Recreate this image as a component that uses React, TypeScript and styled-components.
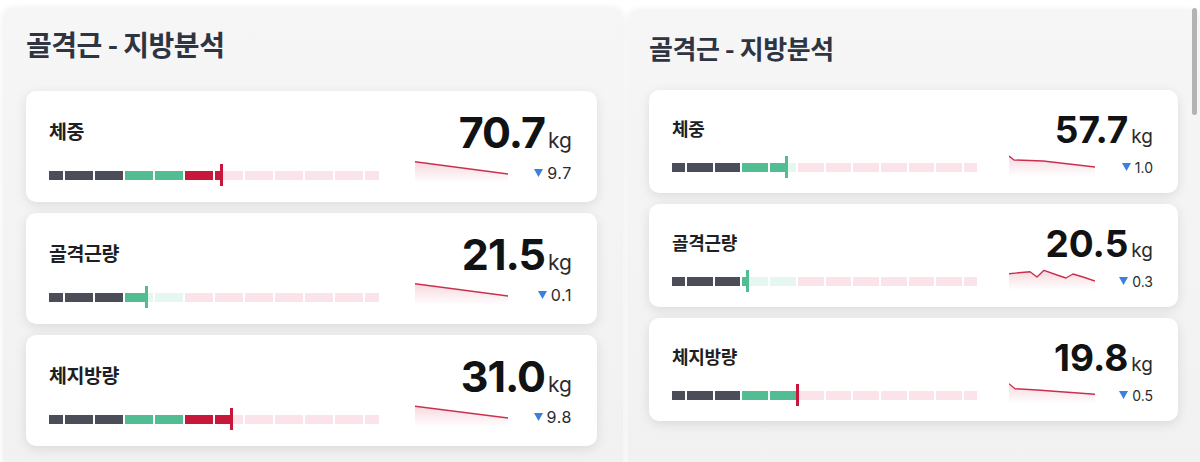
import React, { useId } from "react";
import styled, { createGlobalStyle } from "styled-components";

type Variant = "wide" | "narrow";
type Status = "normal" | "over";

const S = {
  wide: {
    panelTop: "0px", padTop: 20, padL: 23, padR: 26,
    titleSize: 28, titleLH: 33, titleTrack: -0.5, titleGap: 30,
    cardH: 111, cardGap: 11,
    labelSize: 19.5, labelLH: 23, labelTop: 28, labelTrack: -0.4, barGap: 29, barW: 330,
    valueSize: 43, valueTrack: -1, valueTop: 20, kgSize: 21,
    sparkGap: 7, sparkW: 93, sparkH: 22, deltaW: 64, deltaSize: 16, deltaLH: 19, deltaTrack: 0.6,
  },
  narrow: {
    panelTop: "2px", padTop: 22, padL: 21, padR: 22,
    titleSize: 26, titleLH: 31, titleTrack: -0.4, titleGap: 27,
    cardH: 103, cardGap: 11,
    labelSize: 18, labelLH: 21, labelTop: 28, labelTrack: -0.3, barGap: 24, barW: 305,
    valueSize: 37, valueTrack: 0, valueTop: 21, kgSize: 19,
    sparkGap: 6, sparkW: 86, sparkH: 22, deltaW: 58, deltaSize: 14, deltaLH: 17, deltaTrack: 0,
  },
};

const GlobalStyle = createGlobalStyle`
  html, body { margin: 0; padding: 0; background: #ffffff; }
  body { font-family: Inter, "Noto Sans CJK KR", "Noto Sans", sans-serif; }
`;

const Page = styled.div`
  display: flex;
  align-items: flex-start;
  gap: 5px;
  width: 1200px;
  height: 462px;
  padding: 8px 0 0 3px;
  box-sizing: border-box;
  overflow: hidden;
  background: #ffffff;
`;

const PanelBox = styled.section<{ $v: Variant }>`
  position: relative;
  flex: ${(p) => (p.$v === "wide" ? "0 0 620px" : "1 1 auto")};
  margin-top: ${(p) => S[p.$v].panelTop};
  height: 470px;
  box-sizing: border-box;
  padding: ${(p) => `${S[p.$v].padTop}px ${S[p.$v].padR}px 0 ${S[p.$v].padL}px`};
  background: linear-gradient(180deg, #f6f6f7 0%, #f1f1f2 100%);
  border-radius: 10px 10px 0 0;
  box-shadow: 0 0 7px rgba(0, 0, 0, 0.07);
  display: flex;
  flex-direction: column;
`;

const Title = styled.h2<{ $v: Variant }>`
  margin: 0 0 ${(p) => S[p.$v].titleGap}px 0;
  font-family: "Noto Sans CJK KR", "Noto Sans", sans-serif;
  font-weight: 700;
  font-size: ${(p) => S[p.$v].titleSize}px;
  line-height: ${(p) => S[p.$v].titleLH}px;
  letter-spacing: ${(p) => S[p.$v].titleTrack}px;
  color: #2e3441;
`;

const CardList = styled.div<{ $v: Variant }>`
  display: flex;
  flex-direction: column;
  gap: ${(p) => S[p.$v].cardGap}px;
`;

const Card = styled.div<{ $v: Variant }>`
  height: ${(p) => S[p.$v].cardH}px;
  box-sizing: border-box;
  padding: 0 25px 0 23px;
  background: #ffffff;
  border-radius: 10px;
  box-shadow: 0 3px 12px rgba(0, 0, 0, 0.1);
  display: flex;
  justify-content: space-between;
  align-items: flex-start;
`;

const LeftCol = styled.div<{ $v: Variant }>`
  display: flex;
  flex-direction: column;
  padding-top: ${(p) => S[p.$v].labelTop}px;
`;

const Label = styled.div<{ $v: Variant }>`
  font-family: "Noto Sans CJK KR", "Noto Sans", sans-serif;
  font-weight: 700;
  font-size: ${(p) => S[p.$v].labelSize}px;
  line-height: ${(p) => S[p.$v].labelLH}px;
  letter-spacing: ${(p) => S[p.$v].labelTrack}px;
  color: #1d1f24;
`;

const Bar = styled.div<{ $v: Variant }>`
  position: relative;
  width: ${(p) => S[p.$v].barW}px;
  height: 9px;
  margin-top: ${(p) => S[p.$v].barGap}px;
`;

const SegRow = styled.div`
  position: absolute;
  inset: 0;
  display: flex;
  gap: 2px;
`;

const ZONE = {
  dark: { full: "#4b4e58", pale: "#e4e5e8" },
  green: { full: "#52bc92", pale: "#e6f6f0" },
  red: { full: "#c8173a", pale: "#fbe4e9" },
};

const Seg = styled.div<{ $grow: number; $color: string }>`
  flex: ${(p) => p.$grow} 1 0;
  height: 100%;
  background: ${(p) => p.$color};
`;

const Marker = styled.div<{ $status: Status }>`
  position: absolute;
  top: -7px;
  bottom: -6px;
  width: 3px;
  background: ${(p) => (p.$status === "over" ? ZONE.red.full : ZONE.green.full)};
`;

const RightCol = styled.div<{ $v: Variant }>`
  display: flex;
  flex-direction: column;
  align-items: flex-end;
  padding-top: ${(p) => S[p.$v].valueTop}px;
`;

const ValueRow = styled.div`
  display: flex;
  align-items: baseline;
`;

const Value = styled.span<{ $v: Variant }>`
  font-family: Inter, "Noto Sans", sans-serif;
  font-weight: 700;
  font-size: ${(p) => S[p.$v].valueSize}px;
  line-height: ${(p) => S[p.$v].valueSize}px;
  letter-spacing: ${(p) => S[p.$v].valueTrack}px;
  color: #111214;
`;

const Unit = styled.span<{ $v: Variant }>`
  margin-left: 3px;
  font-family: Inter, "Noto Sans", sans-serif;
  font-weight: 400;
  font-size: ${(p) => S[p.$v].kgSize}px;
  color: #2a2b2e;
`;

const SparkRow = styled.div<{ $v: Variant }>`
  display: flex;
  align-items: flex-end;
  margin-top: ${(p) => S[p.$v].sparkGap}px;
`;

const DeltaBox = styled.div<{ $v: Variant }>`
  width: ${(p) => S[p.$v].deltaW}px;
  display: flex;
  justify-content: flex-end;
  align-items: center;
  gap: 4px;
  font-family: Inter, "Noto Sans", sans-serif;
  font-size: ${(p) => S[p.$v].deltaSize}px;
  line-height: ${(p) => S[p.$v].deltaLH}px;
  letter-spacing: ${(p) => S[p.$v].deltaTrack}px;
  color: #2a2b2e;
`;

const Thumb = styled.div`
  position: absolute;
  top: -2px;
  right: 3px;
  width: 5px;
  height: 107px;
  border-radius: 3px;
  background: #b3b3b3;
`;

type Item = {
  label: string;
  value: string;
  delta: string;
  pct: number;
  status: Status;
  spark: [number, number][];
};

const leftItems: Item[] = [
  { label: "체중", value: "70.7", delta: "9.7", pct: 52.4, status: "over", spark: [[0, 0.8], [93, 13]] },
  { label: "골격근량", value: "21.5", delta: "0.1", pct: 29.4, status: "normal", spark: [[0, 0.8], [93, 13]] },
  { label: "체지방량", value: "31.0", delta: "9.8", pct: 55.2, status: "over", spark: [[0, 1.2], [93, 13]] },
];

const rightItems: Item[] = [
  { label: "체중", value: "57.7", delta: "1.0", pct: 37.4, status: "normal", spark: [[0, 2], [5, 6], [34, 7], [60, 10], [86, 13]] },
  {
    label: "골격근량", value: "20.5", delta: "0.3", pct: 24.9, status: "normal",
    spark: [[0, 5.7], [21, 3.7], [28, 9], [35, 2.3], [48, 7], [57, 10], [64, 6], [74, 9], [86, 13]],
  },
  { label: "체지방량", value: "19.8", delta: "0.5", pct: 41.2, status: "over", spark: [[0, 1.7], [6, 6.7], [28, 8], [86, 12.3]] },
];

const zoneOf = (i: number) => (i < 3 ? "dark" : i < 5 ? "green" : "red") as keyof typeof ZONE;
const SEGMENTS = Array.from({ length: 12 }, (_, i) => i);

function SegmentBar({ v, pct, status }: { v: Variant; pct: number; status: Status }) {
  return (
    <Bar $v={v}>
      <SegRow>
        {SEGMENTS.map((i) => (
          <Seg key={i} $grow={i === 0 || i === 11 ? 0.5 : 1} $color={ZONE[zoneOf(i)].pale} />
        ))}
      </SegRow>
      <SegRow style={{ clipPath: `inset(0 ${100 - pct}% 0 0)` }}>
        {SEGMENTS.map((i) => (
          <Seg key={i} $grow={i === 0 || i === 11 ? 0.5 : 1} $color={ZONE[zoneOf(i)].full} />
        ))}
      </SegRow>
      <Marker $status={status} style={{ left: `calc(${pct}% - 1.5px)` }} />
    </Bar>
  );
}

function Sparkline({ v, pts }: { v: Variant; pts: [number, number][] }) {
  const id = useId().replace(/:/g, "");
  const w = S[v].sparkW;
  const h = S[v].sparkH;
  const line = pts.map(([x, y]) => `${x},${y}`).join(" ");
  const area = `${line} ${w},${h} 0,${h}`;
  return (
    <svg width={w} height={h} viewBox={`0 0 ${w} ${h}`}>
      <defs>
        <linearGradient id={`g${id}`} x1="0" y1="0" x2="0" y2="1">
          <stop offset="0" stopColor="#d63c5a" stopOpacity="0.2" />
          <stop offset="1" stopColor="#d63c5a" stopOpacity="0" />
        </linearGradient>
      </defs>
      <polygon points={area} fill={`url(#g${id})`} />
      <polyline points={line} fill="none" stroke="#c9304e" strokeWidth="1.4" strokeLinejoin="round" />
    </svg>
  );
}

function DownTriangle({ v }: { v: Variant }) {
  const s = v === "wide" ? 9 : 9;
  return (
    <svg width={s} height={s - 1} viewBox="0 0 9 8" style={{ marginBottom: 1 }}>
      <polygon points="0,0 9,0 4.5,8" fill="#3b7fe0" />
    </svg>
  );
}

function MetricCard({ v, item }: { v: Variant; item: Item }) {
  return (
    <Card $v={v}>
      <LeftCol $v={v}>
        <Label $v={v}>{item.label}</Label>
        <SegmentBar v={v} pct={item.pct} status={item.status} />
      </LeftCol>
      <RightCol $v={v}>
        <ValueRow>
          <Value $v={v}>{item.value}</Value>
          <Unit $v={v}>kg</Unit>
        </ValueRow>
        <SparkRow $v={v}>
          <Sparkline v={v} pts={item.spark} />
          <DeltaBox $v={v}>
            <DownTriangle v={v} />
            <span>{item.delta}</span>
          </DeltaBox>
        </SparkRow>
      </RightCol>
    </Card>
  );
}

function Panel({ v, items, scroll }: { v: Variant; items: Item[]; scroll?: boolean }) {
  return (
    <PanelBox $v={v}>
      <Title $v={v}>골격근 - 지방분석</Title>
      <CardList $v={v}>
        {items.map((it) => (
          <MetricCard key={it.label} v={v} item={it} />
        ))}
      </CardList>
      {scroll && <Thumb />}
    </PanelBox>
  );
}

export default function App() {
  return (
    <>
      <GlobalStyle />
      <Page>
        <Panel v="wide" items={leftItems} />
        <Panel v="narrow" items={rightItems} scroll />
      </Page>
    </>
  );
}
